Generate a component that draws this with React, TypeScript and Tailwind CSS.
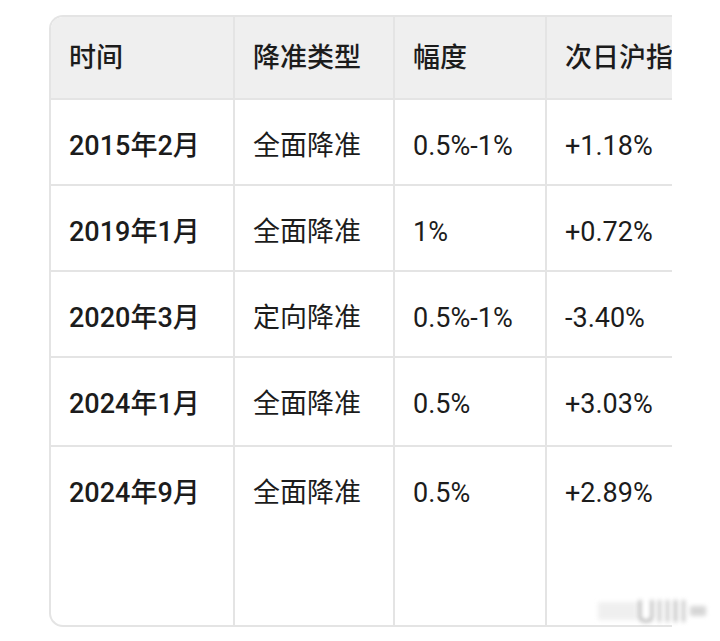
import React from "react";

const rows = [
  { date: "2015年2月", type: "全面降准", range: "0.5%-1%", change: "+1.18%", h: "h-[86px]" },
  { date: "2019年1月", type: "全面降准", range: "1%", change: "+0.72%", h: "h-[86px]" },
  { date: "2020年3月", type: "定向降准", range: "0.5%-1%", change: "-3.40%", h: "h-[86px]" },
  { date: "2024年1月", type: "全面降准", range: "0.5%", change: "+3.03%", h: "h-[89px]" },
  { date: "2024年9月", type: "全面降准", range: "0.5%", change: "+2.89%", h: "h-[178px]" },
];

const headers = ["时间", "降准类型", "幅度", "次日沪指涨跌"];

const cols = "grid grid-cols-[184px_160px_152px_1fr]";

function Watermark() {
  // blurred platform watermark in the bottom-right corner
  return (
    <svg
      className="absolute left-[598px] top-[594px] blur-[2px] opacity-60"
      width="110"
      height="34"
      viewBox="0 0 110 34"
    >
      <rect x="0" y="8" width="40" height="18" fill="#e6e6e6" />
      <path d="M42 6 v16 q0 5 5 5 h2 q5 0 5 -5 v-16" stroke="#555" strokeWidth="2" fill="none" />
      <rect x="60" y="6" width="3" height="22" fill="#9a9a9a" />
      <rect x="68" y="6" width="3" height="22" fill="#9a9a9a" />
      <rect x="76" y="6" width="3" height="22" fill="#8a8a8a" />
      <rect x="84" y="6" width="3" height="22" fill="#999" />
      <rect x="92" y="12" width="16" height="10" fill="#bbb" />
    </svg>
  );
}

export default function App() {
  return (
    <div className="relative h-[641px] w-[720px] overflow-hidden bg-white font-['Roboto','Noto_Sans_CJK_SC',sans-serif] text-[27px] leading-[40px] text-[#1c1c1c]">
      <div className="w-[672px] overflow-hidden pt-[15px]">
        <div className="ml-[49px] w-[720px] overflow-hidden rounded-l-[14px] border-2 border-r-0 border-[#e4e4e4]">
          <div className={`${cols} h-[83px] border-b-2 border-[#e4e4e4] bg-[#efefef]`}>
            {headers.map((h, i) => (
              <div
                key={h}
                className={`flex items-center whitespace-nowrap pl-[18px] font-medium ${
                  i < 3 ? "border-r-2 border-[#e4e4e4]" : ""
                }`}
              >
                {h}
              </div>
            ))}
          </div>
          {rows.map((r, idx) => (
            <div
              key={r.date}
              className={`${cols} ${r.h} ${idx < rows.length - 1 ? "border-b-2 border-[#e4e4e4]" : ""}`}
            >
              <div className="border-r-2 border-[#e4e4e4] pl-[18px] pt-[26px] font-medium">{r.date}</div>
              <div className="border-r-2 border-[#e4e4e4] pl-[18px] pt-[26px]">{r.type}</div>
              <div className="border-r-2 border-[#e4e4e4] pl-[18px] pt-[26px]">{r.range}</div>
              <div className="pl-[18px] pt-[26px]">{r.change}</div>
            </div>
          ))}
        </div>
      </div>
      <Watermark />
    </div>
  );
}
